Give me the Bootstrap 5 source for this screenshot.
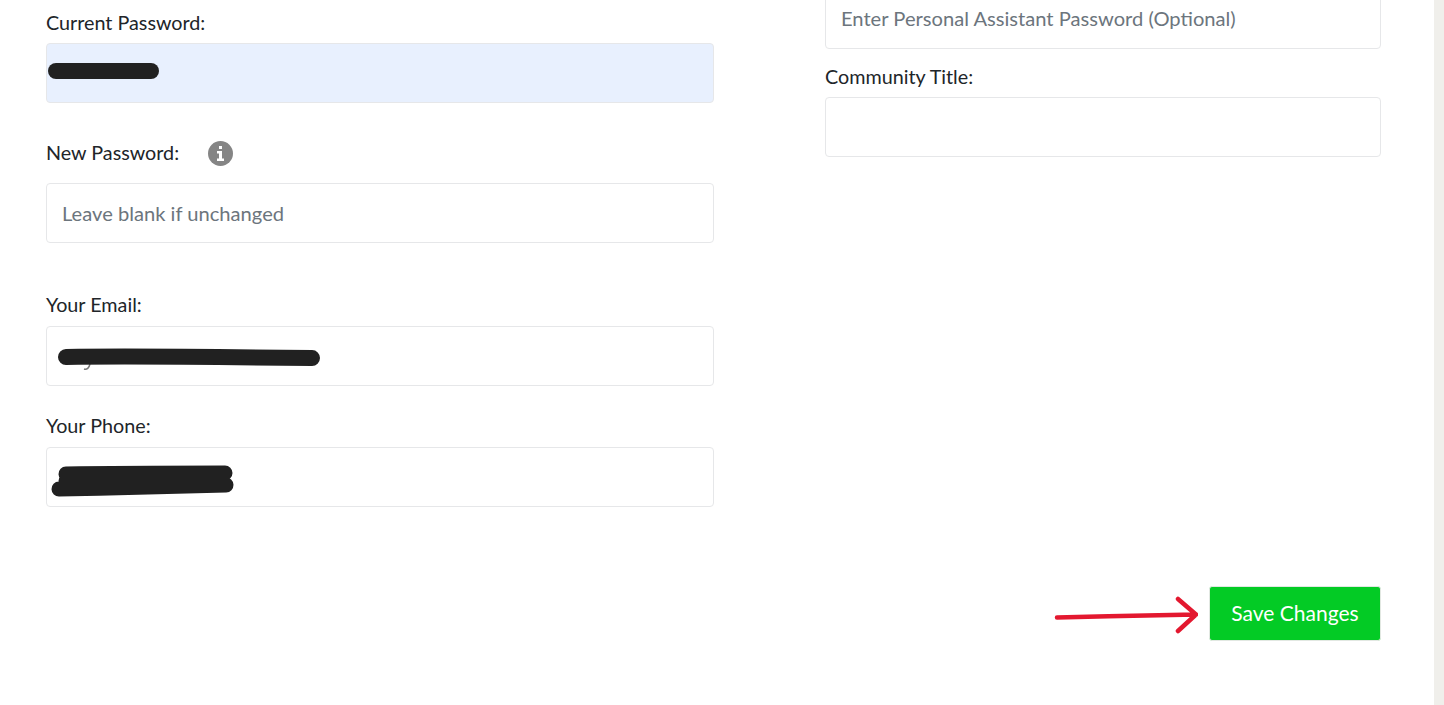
<!DOCTYPE html>
<html lang="en">
<head>
  <meta charset="UTF-8"/>
  <title>Account Settings</title>
  <meta name="viewport" content="width=device-width, initial-scale=1"/>
  <link href="https://cdn.jsdelivr.net/npm/bootstrap@5.3.0/dist/css/bootstrap.min.css" rel="stylesheet"/>
  <style>
    html, body { height: 705px; overflow: hidden; }
    body { background: #f0efeb; font-family: Lato, "Open Sans", sans-serif; font-size: 20px; color: #212529; }
    .page-panel { width: 1434px; height: 705px; background: #fff; padding: 0 53px 0 46px; overflow: hidden; }
    .left-col { width: 668px; padding-top: 11px; }
    .right-col { width: 556px; margin-top: -11px; }
    .field-label { display: block; font-size: 19.75px; line-height: 23px; margin: 0 0 10px; }
    .field-input { height: 60px; padding: 0 15px 1px; font-size: 20.15px; color: #212529; border: 1px solid #e6e7e9; border-radius: 4px; }
    .field-input::placeholder { color: #6c757d; opacity: 1; }
    .field-input.filled-in { background: #e8f0fe; }
    .right-col .field-input { padding-bottom: 3px; }
    .field-wrap { position: relative; }
    .scribble { position: absolute; left: 0; top: 0; pointer-events: none; }
    .info-dot { width: 25px; height: 25px; border-radius: 50%; background: #858585; margin-left: 29px; }
    .save-btn { width: 172px; height: 55px; margin-left: 11px; padding: 0 0 2px; font-size: 21px; color: #fff; background: #03cb25; border: 1px solid #e2e8e2; border-radius: 3px; }
    .save-btn:hover { background: #03b822; color: #fff; }
    .gap-a { margin-top: 38px; }
    .gap-b { margin-top: 50px; }
    .gap-c { margin-top: 28px; }
    .gap-d { margin-top: 16px; }
    .label-tight { margin-bottom: 9px; }
    .label-info { margin-bottom: 17px; }
    .label-info .field-label { margin-bottom: 2px; }
    .btn-row { margin-top: 79px; }
  </style>
</head>
<body>
  <main class="page-panel">
    <form>
      <div class="d-flex justify-content-between">
        <div class="left-col">
          <label class="field-label label-tight" for="curPass">Current Password:</label>
          <div class="field-wrap">
            <input id="curPass" type="text" class="form-control field-input filled-in"/>
            <svg class="scribble" width="200" height="60" viewBox="0 0 200 60"><path d="M10 28H105" stroke="#212121" stroke-width="16" stroke-linecap="round"/></svg>
          </div>

          <div class="d-flex align-items-center gap-a label-info">
            <label class="field-label" for="newPass">New Password:</label>
            <span class="info-dot d-flex align-items-center justify-content-center">
              <svg width="9" height="15" viewBox="0 0 9 15"><path fill="#fff" d="M3 0h3v3H3zM1 5h5v7.500h2V15H1v-2.500h2V7.500H1z"/></svg>
            </span>
          </div>
          <input id="newPass" type="text" class="form-control field-input" placeholder="Leave blank if unchanged"/>

          <label class="field-label gap-b" for="email">Your Email:</label>
          <div class="field-wrap">
            <input id="email" type="text" class="form-control field-input"/>
            <svg class="scribble" width="300" height="60" viewBox="0 0 300 60"><path d="M44 38C43 42 41 44 38 43" fill="none" stroke="#777" stroke-width="1.500"/><path d="M20 31C80 30 180 31 266 32" stroke="#212121" stroke-width="16" stroke-linecap="round"/></svg>
          </div>

          <label class="field-label gap-c" for="phone">Your Phone:</label>
          <div class="field-wrap">
            <input id="phone" type="text" class="form-control field-input"/>
            <svg class="scribble" width="220" height="60" viewBox="0 0 220 60"><path d="M20 27C70 26 130 26 179 26M13 42C70 41 130 39 180 38M20 34H175" stroke="#212121" stroke-width="15" stroke-linecap="round"/></svg>
          </div>
        </div>

        <div class="right-col">
          <input type="text" class="form-control field-input" placeholder="Enter Personal Assistant Password (Optional)"/>
          <label class="field-label gap-d label-tight" for="commTitle">Community Title:</label>
          <input id="commTitle" type="text" class="form-control field-input"/>
        </div>
      </div>

      <div class="d-flex justify-content-end align-items-center btn-row">
        <svg width="145" height="40" viewBox="0 0 145 40"><path d="M4 23.500C50 22.500 100 21 143 20.500M125 5L143 20.500L125 37" fill="none" stroke="#e3182f" stroke-width="4.500" stroke-linecap="round" stroke-linejoin="round"/></svg>
        <button type="button" class="btn save-btn">Save Changes</button>
      </div>
    </form>
  </main>
  <script src="https://cdn.jsdelivr.net/npm/bootstrap@5.3.0/dist/js/bootstrap.bundle.min.js"></script>
</body>
</html>
